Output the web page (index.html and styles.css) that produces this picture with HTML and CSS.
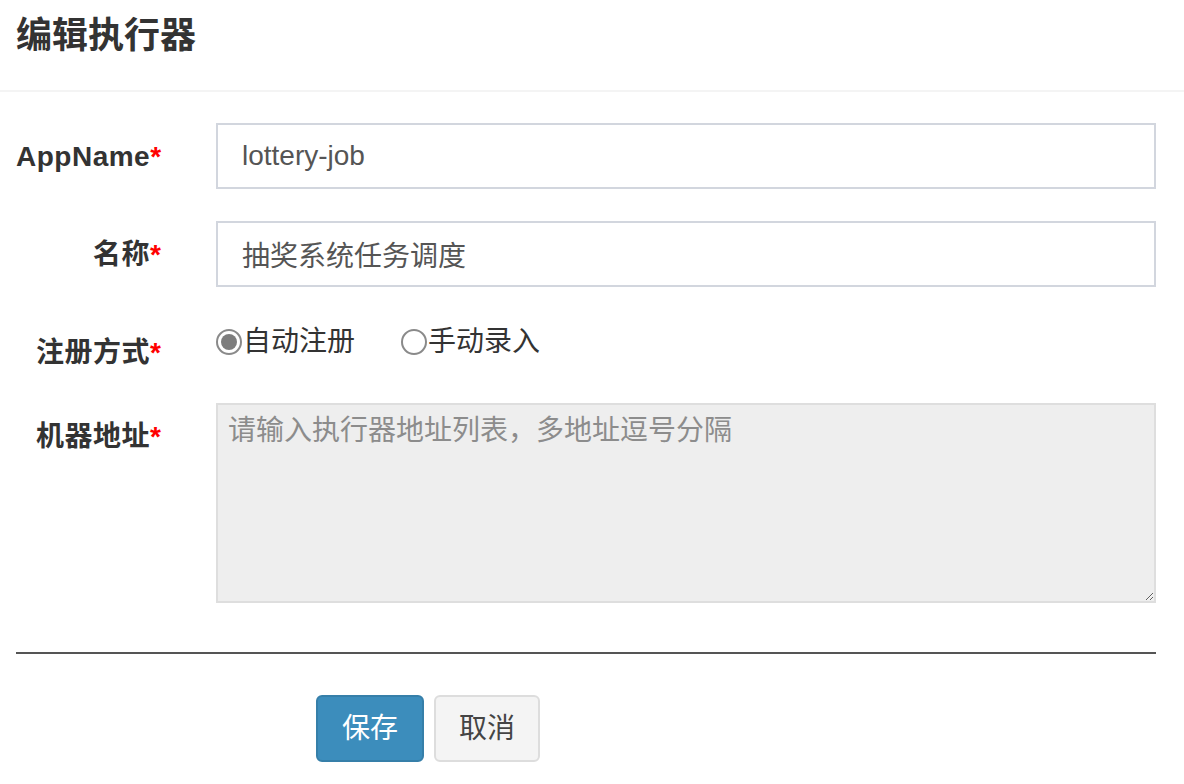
FILE: index.html
```html
<!DOCTYPE html>
<html lang="zh-CN">
<head>
<meta charset="utf-8">
<title>编辑执行器</title>
<link rel="stylesheet" href="styles.css">
</head>
<body>
<div class="modal">
  <div class="modal-header">
    <h4 class="modal-title">编辑执行器</h4>
  </div>
  <form class="modal-body">
    <div class="form-row">
      <label class="form-label">AppName<span class="req">*</span></label>
      <div class="form-ctl"><input class="text-input" type="text" value="lottery-job"></div>
    </div>
    <div class="form-row">
      <label class="form-label">名称<span class="req">*</span></label>
      <div class="form-ctl"><input class="text-input" type="text" value="抽奖系统任务调度"></div>
    </div>
    <div class="form-row radio-row">
      <label class="form-label">注册方式<span class="req">*</span></label>
      <div class="form-ctl radio-group">
        <label class="radio-item"><span class="radio-dot checked"></span>自动注册</label>
        <label class="radio-item"><span class="radio-dot"></span>手动录入</label>
      </div>
    </div>
    <div class="form-row last">
      <label class="form-label">机器地址<span class="req">*</span></label>
      <div class="form-ctl"><textarea class="text-area" placeholder="请输入执行器地址列表，多地址逗号分隔" readonly></textarea></div>
    </div>
    <hr class="divider">
    <div class="actions">
      <button type="button" class="btn btn-primary">保存</button>
      <button type="button" class="btn btn-default">取消</button>
    </div>
  </form>
</div>
</body>
</html>
```
FILE: styles.css
```css
* { box-sizing: border-box; }
html, body {
  margin: 0;
  padding: 0;
  background: #fff;
}
body {
  font-family: "Liberation Sans", "Noto Sans CJK SC", sans-serif;
  color: #333;
  font-size: 28px;
  line-height: 40px;
}
.modal {
  width: 1184px;
}
.modal-header {
  padding: 10px 16px 29px;
  border-bottom: 2px solid #f4f4f4;
}
.modal-title {
  margin: 0;
  font-size: 36px;
  line-height: 51px;
  font-weight: 700;
  color: #333;
}
.modal-body {
  padding: 31px 28px 20px 16px;
}
.form-row {
  display: grid;
  grid-template-columns: 145px 955px;
  column-gap: 55px;
  margin-bottom: 32px;
}
.form-row.radio-row { margin-bottom: 30px; }
.form-row.last { margin-bottom: 0; }
.form-label {
  text-align: right;
  font-weight: 700;
  padding-top: 14px;
  line-height: 40px;
  color: #333;
  white-space: nowrap;
  letter-spacing: 0.5px;
}
.req { color: #f00; letter-spacing: 0; }
.form-ctl { min-width: 0; }
.text-input {
  display: block;
  width: 940px;
  height: 66px;
  border: 2px solid #d2d6de;
  padding: 0 24px;
  font-family: "Liberation Sans", "Noto Sans CJK SC", sans-serif;
  font-size: 28px;
  color: #555;
  background: #fff;
  outline: none;
}
.radio-group {
  display: flex;
  gap: 46px;
  padding-top: 3px;
  height: 46px;
}
.radio-item {
  display: flex;
  align-items: center;
  height: 40px;
  color: #333;
}
.radio-dot {
  width: 26px;
  height: 26px;
  border: 2px solid #8a8a8a;
  border-radius: 50%;
  margin-right: 1px;
  background: #fff;
  position: relative;
}
.radio-dot.checked::after {
  content: "";
  position: absolute;
  left: 3px;
  top: 3px;
  width: 16px;
  height: 16px;
  border-radius: 50%;
  background: #7d7d7d;
}
.text-area {
  display: block;
  width: 940px;
  height: 200px;
  border: 2px solid #dedede;
  background: #eee;
  padding: 6px 10px;
  font-family: "Liberation Sans", "Noto Sans CJK SC", sans-serif;
  font-size: 28px;
  line-height: 40px;
  color: #555;
  outline: none;
  resize: both;
}
.text-area::placeholder { color: #8c8c8c; }
.divider {
  margin: 49px 0 41px;
  border: 0;
  border-top: 2px solid #555;
  width: 1140px;
}
.actions {
  display: flex;
  gap: 10px;
  padding-left: 300px;
}
.btn {
  height: 67px;
  padding: 0 24px;
  border-radius: 6px;
  border: 2px solid transparent;
  font-family: "Liberation Sans", "Noto Sans CJK SC", sans-serif;
  font-size: 28px;
  line-height: 1;
}
.btn-primary {
  background: #3c8dbc;
  border-color: #367fa9;
  color: #fff;
}
.btn-default {
  background: #f4f4f4;
  border-color: #ddd;
  color: #444;
  padding: 0 23px;
}
```
